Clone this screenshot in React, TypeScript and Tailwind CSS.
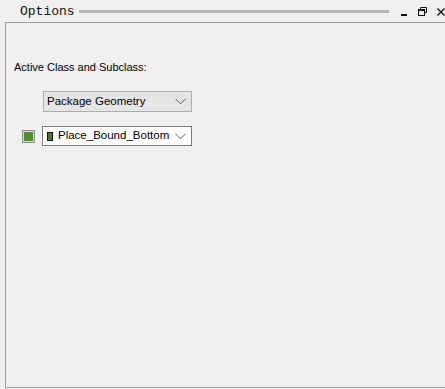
import React from 'react';

function Chevron() {
  return (
    <svg width="11" height="7" viewBox="0 0 11 7" className="shrink-0">
      <path d="M0.5 0.8 L5.5 5.8 L10.5 0.8" fill="none" stroke="#606060" strokeWidth="1" />
    </svg>
  );
}

export default function App() {
  return (
    <div
      className="w-[445px] h-[389px] bg-[#f0f0f0] overflow-hidden text-[#000]"
      style={{ fontFamily: '"Liberation Sans", Arial, sans-serif' }}
    >
      {/* title bar */}
      <div className="h-[22px] flex items-center">
        <span
          className="pl-[20px] text-[13px] leading-none text-[#111]"
          style={{ fontFamily: '"Liberation Mono", "DejaVu Sans Mono", monospace' }}
        >
          Options
        </span>
        <div className="w-[313px] h-[3px] bg-[#b4b4b4] ml-[4px] mt-[1px]" />
        <div className="flex items-center ml-[12px] gap-[10px]">
          <svg width="7" height="14" viewBox="0 0 7 14">
            <rect x="0" y="10" width="6" height="2" fill="#111" />
          </svg>
          <svg width="9" height="14" viewBox="0 0 9 14">
            <path d="M2.5 3.5 H8.5 V8.5 H6.5 M2.5 3.5 V5.5" fill="none" stroke="#111" strokeWidth="1" />
            <rect x="0.5" y="5.5" width="6" height="6" fill="none" stroke="#111" strokeWidth="1" />
            <rect x="0.5" y="5.5" width="6" height="1.5" fill="#111" />
          </svg>
          <svg width="8" height="14" viewBox="0 0 8 14">
            <path d="M0.5 4.5 L7.5 11.5 M7.5 4.5 L0.5 11.5" stroke="#111" strokeWidth="1.4" />
          </svg>
        </div>
      </div>

      {/* panel */}
      <div className="ml-[5px] w-[460px] h-[366px] border-l border-t border-b border-[#a0a0a0] pt-[37px] pl-[8px]">
        <div className="text-[11px] leading-[14px]">Active Class and Subclass:</div>

        <div className="mt-[17px] ml-[29px] w-[149px] h-[21px] bg-[#e5e5e5] border border-[#adadad] flex items-center justify-between pl-[3px] pr-[5px]">
          <span className="text-[11.5px] leading-none">Package Geometry</span>
          <Chevron />
        </div>

        <div className="mt-[14px] flex items-center">
          <div className="ml-[8px] w-[13px] h-[13px] border border-[#8c8c8c] bg-[#d8d8d8] p-[1px]">
            <div className="w-full h-full bg-[#52902f]" />
          </div>
          <div className="ml-[7px] w-[150px] h-[20px] bg-white border border-[#7a7a7a] flex items-center justify-between pl-[4px] pr-[5px]">
            <div className="flex items-center">
              <div className="w-[6px] h-[9px] bg-[#4a7a2a] border border-[#111]" />
              <span className="ml-[5px] text-[11.5px] leading-none">Place_Bound_Bottom</span>
            </div>
            <Chevron />
          </div>
        </div>
      </div>
    </div>
  );
}
